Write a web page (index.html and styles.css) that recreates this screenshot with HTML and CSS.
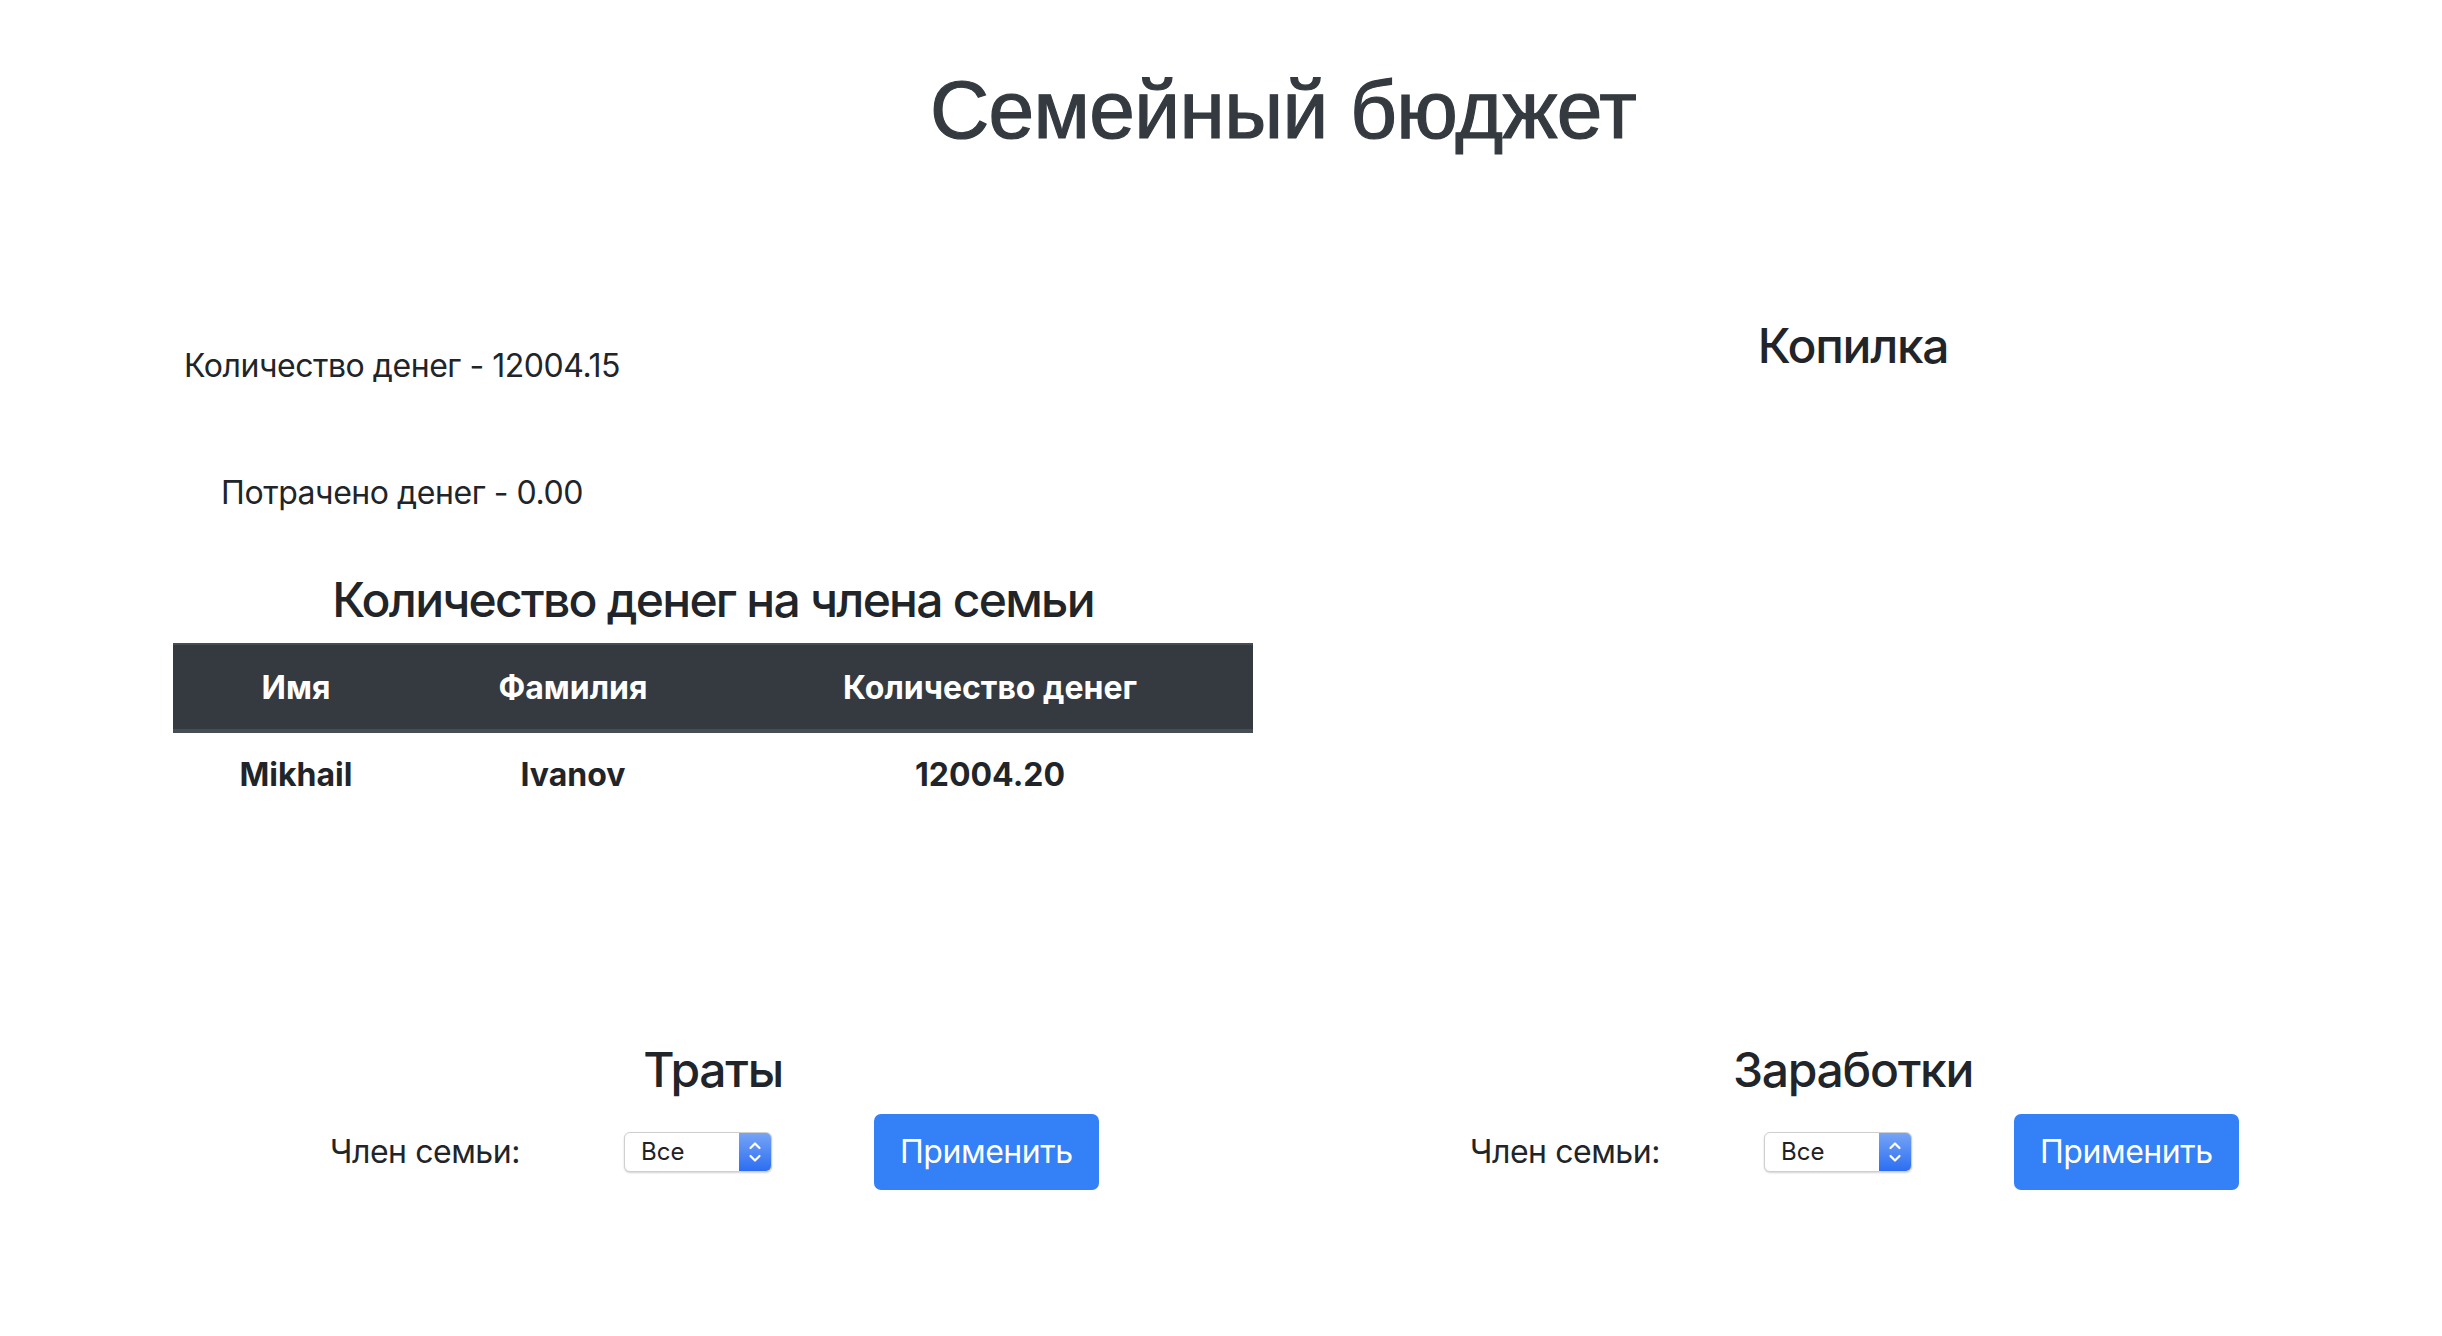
FILE: index.html
```html
<!DOCTYPE html>
<html lang="ru">
<head>
<meta charset="utf-8">
<title>Семейный бюджет</title>
<link rel="stylesheet" href="styles.css">
</head>
<body>
<div class="container">
  <h1 class="title">Семейный бюджет</h1>
  <div class="row top-row">
    <div class="col">
      <div class="stats">
        <p class="stat stat-first">Количество денег - 12004.15</p>
        <p class="stat stat-second">Потрачено денег - 0.00</p>
      </div>
      <h4 class="heading table-heading">Количество денег на члена семьи</h4>
      <table class="money-table">
        <thead>
          <tr>
            <th class="c1">Имя</th>
            <th class="c2">Фамилия</th>
            <th class="c3">Количество денег</th>
          </tr>
        </thead>
        <tbody>
          <tr>
            <td>Mikhail</td>
            <td>Ivanov</td>
            <td>12004.20</td>
          </tr>
        </tbody>
      </table>
    </div>
    <div class="col">
      <h4 class="heading piggy-heading">Копилка</h4>
    </div>
  </div>
  <div class="row bottom-row">
    <div class="col">
      <h4 class="heading">Траты</h4>
      <form class="filter">
        <label class="filter-label">Член семьи:</label>
        <div class="select">
          <span class="select-value">Все</span>
          <span class="select-arrows">
            <svg width="16" height="28" viewBox="0 0 16 28"><path d="M3.5 10 L8 5.5 L12.5 10 M3.5 18 L8 22.5 L12.5 18" fill="none" stroke="#fff" stroke-width="2.2" stroke-linecap="round" stroke-linejoin="round"/></svg>
          </span>
        </div>
        <button type="button" class="btn">Применить</button>
      </form>
    </div>
    <div class="col">
      <h4 class="heading">Заработки</h4>
      <form class="filter">
        <label class="filter-label">Член семьи:</label>
        <div class="select">
          <span class="select-value">Все</span>
          <span class="select-arrows">
            <svg width="16" height="28" viewBox="0 0 16 28"><path d="M3.5 10 L8 5.5 L12.5 10 M3.5 18 L8 22.5 L12.5 18" fill="none" stroke="#fff" stroke-width="2.2" stroke-linecap="round" stroke-linejoin="round"/></svg>
          </span>
        </div>
        <button type="button" class="btn">Применить</button>
      </form>
    </div>
  </div>
</div>
</body>
</html>
```

FILE: styles.css
```css
* { box-sizing: border-box; }

html, body {
  margin: 0;
  padding: 0;
  background: #fff;
}

body {
  font-family: "Inter", "Noto Sans", sans-serif;
  font-size: 32px;
  line-height: 48px;
  letter-spacing: -0.45px;
  color: #212529;
}

.container {
  margin-left: 143px;
  width: 2280px;
}

.title {
  margin: 61px 0 0;
  font-family: "Liberation Sans", Arial, sans-serif;
  font-size: 82px;
  line-height: 98px;
  font-weight: 400;
  letter-spacing: -0.6px;
  -webkit-text-stroke: 1.2px #343a40;
  color: #343a40;
  text-align: center;
}

.row {
  display: flex;
}

.col {
  flex: 1 1 0;
  padding: 0 30px;
  min-width: 0;
}

.stats {
  width: 458px;
  text-align: center;
}

.stat {
  margin: 0;
}

.stat-first {
  margin-top: 183px;
}

.stat-second {
  margin-top: 79px;
}

.heading {
  margin: 0;
  font-size: 48px;
  line-height: 58px;
  font-weight: 500;
  letter-spacing: -1.3px;
  text-align: center;
  color: #212529;
}

.table-heading {
  margin-top: 54px;
  margin-bottom: 14px;
  letter-spacing: -1.75px;
}

.piggy-heading {
  margin-top: 158px;
}

.money-table {
  width: 100%;
  border-collapse: collapse;
  text-align: center;
  letter-spacing: 0;
}

.money-table th,
.money-table td {
  font-weight: 700;
  padding: 18px 0;
  line-height: 48px;
}

.money-table th {
  background: #343a40;
  color: #fff;
  border-top: 2px solid #454d55;
  border-bottom: 4px solid #454d55;
  padding-top: 19px;
  padding-bottom: 17px;
}

.money-table td {
  color: #212529;
}

.c1 { width: 246px; }
.c2 { width: 308px; }
.c3 { width: 526px; }

.bottom-row {
  margin-top: 224px;
}

.filter {
  display: flex;
  align-items: center;
  margin-top: 15px;
  padding-left: 157px;
}

.filter-label {
  width: 294px;
  flex: none;
}

.select {
  flex: none;
  display: flex;
  width: 148px;
  height: 40px;
  border: 1px solid #cfcfcf;
  border-radius: 6px;
  background: #fff;
  box-shadow: 0 1px 2px rgba(0, 0, 0, 0.18);
  overflow: hidden;
}

.select-value {
  flex: 1;
  padding-left: 16px;
  font-size: 24px;
  line-height: 38px;
  letter-spacing: 0;
  color: #222;
}

.select-arrows {
  width: 32px;
  display: flex;
  align-items: center;
  justify-content: center;
  background: linear-gradient(#76a4f6, #2c6ef2);
}

.btn {
  flex: none;
  margin-left: 102px;
  height: 76px;
  padding: 0 26px;
  border: 0;
  border-radius: 7px;
  background: #3480f6;
  color: #fff;
  font-family: "Inter", "Noto Sans", sans-serif;
  font-size: 32px;
  line-height: 48px;
  letter-spacing: -0.45px;
}
```
